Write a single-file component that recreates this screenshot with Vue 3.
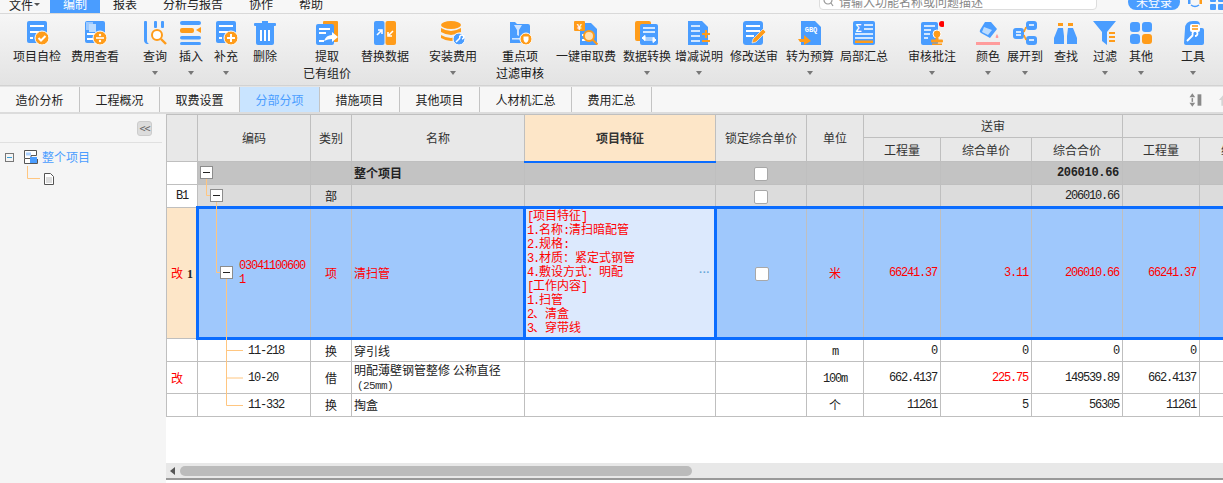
<script setup>
const B = '#4a9dff'
const O = '#ff9c1a'
const doc = `<rect x="2" y="0" width="20" height="22" rx="2" fill="${B}"/><rect x="5" y="4" width="14" height="2" fill="#fff"/><rect x="5" y="10" width="9" height="2" fill="#fff"/><rect x="5" y="16" width="3" height="2" fill="#fff"/>`

const tools = [
  { label: '项目自检', w: 58, icon: doc + `<circle cx="17" cy="17" r="7" fill="${O}" stroke="#fff"/><path d="M13.5 17l2.5 2.5 4.5-4.5" fill="none" stroke="#fff" stroke-width="2"/>` },
  { label: '费用查看', w: 58, icon: `<rect x="2" y="0" width="20" height="22" rx="2" fill="${B}"/><rect x="3" y="1" width="7" height="8" fill="#9cc9ff"/><rect x="6" y="3" width="7" height="8" fill="#bcdcff"/><rect x="4" y="12" width="8" height="2" fill="#fff"/><rect x="4" y="17" width="6" height="2" fill="#fff"/><circle cx="17" cy="17" r="7" fill="${O}" stroke="#fff"/><path d="M13 17h8" stroke="#fff" stroke-width="1.6"/><circle cx="17" cy="14" r="1.2" fill="#fff"/><circle cx="17" cy="20" r="1.2" fill="#fff"/>` },
  { label: '查询', w: 36, gap: 13, caret: true, icon: `<path d="M1 1q0-1 1-1h1q1 0 1 1v19q0 2 2 3H4q-3-1-3-4z" fill="${B}"/><rect x="11" y="0" width="3" height="7" rx="1" fill="${B}"/><rect x="18" y="0" width="3" height="7" rx="1" fill="${B}"/><circle cx="14" cy="14" r="5" fill="#fff" stroke="${O}" stroke-width="2"/><path d="M18 18l5 5" stroke="${O}" stroke-width="2.4"/>` },
  { label: '插入', w: 36, caret: true, icon: `<rect x="1" y="0" width="21" height="4" rx="2" fill="${B}"/><rect x="1" y="7" width="14" height="5" rx="2" fill="${O}"/><path d="M22 6v6l-5-3z" fill="${O}"/><rect x="1" y="15" width="21" height="3.5" rx="1.7" fill="${B}"/><rect x="1" y="21" width="21" height="3" rx="1.5" fill="${B}"/>` },
  { label: '补充', w: 34, caret: true, icon: doc + `<circle cx="17" cy="17" r="7" fill="${O}" stroke="#fff"/><path d="M13 17h8M17 13v8" stroke="#fff" stroke-width="2"/>` },
  { label: '删除', w: 44, icon: `<rect x="1" y="2" width="22" height="3" rx="1" fill="${B}"/><rect x="9" y="0" width="6" height="3" fill="${B}"/><path d="M3 5h18v17q0 2-2 2H5q-2 0-2-2z" fill="${B}"/><path d="M8 9v11M12 9v11M16 9v11" stroke="#fff" stroke-width="2"/>` },
  { label: '提取', second: '已有组价', w: 52, gap: 14, icon: `<rect x="8" y="0" width="15" height="21" rx="1" fill="${O}"/><rect x="1" y="3" width="18" height="21" rx="2" fill="${B}"/><rect x="4" y="7" width="11" height="2" fill="#fff"/><rect x="4" y="11" width="7" height="2" fill="#fff"/><rect x="4" y="19" width="5" height="2" fill="#fff"/><path d="M9 20q2-6 8-6v-3l6 5-6 5v-3q-4 0-8 2z" fill="#fff"/>` },
  { label: '替换数据', w: 64, icon: `<rect x="1" y="0" width="10.5" height="24" rx="2" fill="${B}"/><rect x="12.5" y="0" width="10.5" height="24" rx="2" fill="${O}"/><path d="M4 14l4-4M5 9h4v4" fill="none" stroke="#fff" stroke-width="1.6"/><path d="M20 10l-4 4M19 15h-4v-4" fill="none" stroke="#fff" stroke-width="1.6"/>` },
  { label: '安装费用', w: 72, caret: true, icon: `<ellipse cx="10" cy="4" rx="10" ry="4" fill="${O}"/><path d="M0 7q10 6 20 0v4q-10 6-20 0z" fill="${O}"/><path d="M0 14q10 6 20 0v3q-10 6-20 0z" fill="${O}"/><circle cx="18" cy="18" r="6" fill="${B}" stroke="#fff"/><path d="M15 21l4-4m0 0a2 2 0 1 1 2 1" fill="none" stroke="#fff" stroke-width="1.6"/>` },
  { label: '重点项', second: '过滤审核', w: 62, strong: true, icon: `<path d="M2 1h5l2 2h11q2 0 2 2v17H2z" fill="${B}"/><path d="M6 4h8l-3 5v6l-2-1V9z" fill="#cfe4ff"/><rect x="4" y="17" width="8" height="1.6" fill="#cfe4ff"/><circle cx="18" cy="18" r="6" fill="${O}" stroke="#fff"/><path d="M15.5 15.5h5v3q0 2-2.500 3.500q-2.500-1.500-2.500-3.500z" fill="#fff"/>` },
  { label: '一键审取费', w: 70, icon: `<path d="M6 2h11l6 6v16H6z" fill="${B}"/><rect x="0" y="0" width="11" height="10" rx="1" fill="${O}"/><text x="5.500" y="8.500" font-size="9" font-family="Liberation Sans" font-weight="700" text-anchor="middle" fill="#fff">¥</text><rect x="8" y="13" width="4" height="2" fill="#fff"/><rect x="8" y="18" width="4" height="2" fill="#fff"/><circle cx="15" cy="15" r="5" fill="#ffe0b3" stroke="${O}" stroke-width="2"/><path d="M18.500 18.500l5 5" stroke="${O}" stroke-width="2"/>` },
  { label: '数据转换', w: 52, caret: true, icon: `<rect x="0" y="0" width="16" height="20" rx="2" fill="${O}"/><rect x="5" y="3" width="18" height="21" rx="2" fill="${B}"/><path d="M8 7h12M8 11h12" stroke="#fff" stroke-width="1.600"/><path d="M7 17l3-2.500v5zM10 17h10M21 19l-3-2.500v5zM9 19h9" fill="#fff" stroke="#fff" stroke-width="1"/>` },
  { label: '增减说明', w: 52, caret: true, icon: `<path d="M1 0h14l6 6v18H1z" fill="${B}"/><path d="M4 5h9M4 10h9M4 15h9M4 20h9" stroke="#fff" stroke-width="1.600"/><path d="M15 13h8M19 9v8M15 20h8" stroke="${O}" stroke-width="2.200"/>` },
  { label: '修改送审', w: 58, icon: `<rect x="1" y="0" width="20" height="24" rx="3" fill="${B}"/><path d="M4 5h14M4 10h14M4 15h8" stroke="#fff" stroke-width="1.800"/><path d="M10 22l1-4L21 8l3 3-10 10z" fill="${O}" stroke="#fff" stroke-width=".6"/>` },
  { label: '转为预算', w: 54, caret: true, icon: `<path d="M3 0h14l6 6v18H3z" fill="${B}"/><text x="13" y="11" font-size="7" font-family="Liberation Mono" font-weight="700" text-anchor="middle" fill="#fff">GBQ</text><path d="M0 18h6v-4l7 6-7 4v-3H2z" fill="${O}"/>` },
  { label: '局部汇总', w: 54, icon: `<rect x="1" y="0" width="22" height="24" rx="2" fill="${B}"/><text x="6.500" y="11" font-size="10" font-family="Liberation Sans" font-weight="700" text-anchor="middle" fill="#fff">Σ</text><path d="M12 4h9M12 8h9M3 13h18M3 17h18" stroke="#fff" stroke-width="1.500"/><rect x="3" y="19.500" width="18" height="2.500" fill="${O}"/>` },
  { label: '审核批注', w: 82, caret: true, icon: `<rect x="1" y="1" width="17" height="23" rx="2" fill="${B}"/><path d="M4 5h11M4 9h7M4 13h6M4 17h4" stroke="#fff" stroke-width="1.600"/><circle cx="17" cy="13" r="4" fill="${O}" stroke="#fff"/><rect x="15.500" y="15" width="3" height="4" fill="${O}"/><rect x="11" y="18.500" width="12" height="3" rx="1" fill="${O}"/><rect x="12" y="22.500" width="10" height="1.500" fill="${O}"/><circle cx="22" cy="3" r="3" fill="#f00"/>` },
  { label: '颜色', w: 30, caret: true, icon: `<path d="M9 1h6l6 7-7 9-9-5q-2-1-1-3z" fill="${B}"/><path d="M8 6l8 3-4 5-6-3z" fill="#bcdcff"/><path d="M21 13q2 3 1 4h-2q-1-1 1-4z" fill="#ff9c9c"/><rect x="0" y="21" width="24" height="3" fill="#ff9c9c"/>` },
  { label: '展开到', w: 44, caret: true, icon: `<rect x="0" y="7" width="11" height="11" rx="3" fill="${B}"/><rect x="13" y="0" width="11" height="9" rx="3" fill="${B}"/><rect x="13" y="15" width="11" height="9" rx="3" fill="${B}"/><path d="M3 11h5M3 14h5M16 4h5M16 19h5" stroke="#fff" stroke-width="1.400"/><path d="M11 11l2-5M11 14l2 5" stroke="${O}" stroke-width="1.600"/>` },
  { label: '查找', w: 38, icon: `<rect x="4" y="2" width="5" height="3" fill="${O}"/><rect x="14" y="2" width="5" height="3" fill="${O}"/><path d="M4 7h5l1 8v8H0v-6z" fill="${B}"/><path d="M14 7h5l4 10v6H13v-8z" fill="${B}"/>` },
  { label: '过滤', w: 40, caret: true, icon: `<path d="M0 0h23l-9 11v13l-5-4v-9z" fill="${B}"/><path d="M16 12h6M16 16h6M16 20h6" stroke="${O}" stroke-width="1.800"/>` },
  { label: '其他', w: 32, caret: true, icon: `<rect x="1" y="1" width="10" height="10" rx="3" fill="${B}"/><rect x="13" y="1" width="10" height="10" rx="3" fill="${B}"/><rect x="1" y="13" width="10" height="10" rx="3" fill="${B}"/><rect x="13" y="13" width="10" height="10" rx="3" fill="${O}"/>` },
  { label: '工具', w: 72, caret: true, icon: `<path d="M4 8q0-8 8-8h3q4 0 4 4v3h2q2 0 2 2v13q0 2-2 2H5q-2 0-2-2z" fill="${B}"/><rect x="9" y="3" width="10" height="8" rx="2" fill="#fff"/><path d="M11 5h6" stroke="${O}" stroke-width="1.600"/><path d="M11 8h6" stroke="${O}" stroke-width="1.600"/><path d="M6 20l6-6m0 0a2.500 2.500 0 1 1 2 1" fill="none" stroke="#fff" stroke-width="1.800"/>` },
]

const tabs = [
  { label: '造价分析', w: 80 },
  { label: '工程概况', w: 80 },
  { label: '取费设置', w: 80 },
  { label: '分部分项', w: 80, active: true },
  { label: '措施项目', w: 80 },
  { label: '其他项目', w: 80 },
  { label: '人材机汇总', w: 92 },
  { label: '费用汇总', w: 80 },
]

const menus = ['报表', '分析与报告', '协作', '帮助']
const cols = [31, 113, 41, 173, 191, 91, 57, 77, 91, 91, 77, 91]
const features = ['[项目特征]', '1.名称:清扫暗配管', '2.规格:', '3.材质：紧定式钢管', '4.敷设方式：明配', '[工作内容]', '1.扫管', '2、清盒', '3、穿带线']
const subRows = [
  { cls: 'r-sub', mark: '', code: '11-218', type: '换', name: '穿引线', unit: 'm', vals: ['0', '0', '0', '0', '0'] },
  { cls: 'r-tall', mark: '改', code: '10-20', type: '借', name: '明配薄壁钢管整修 公称直径', name2: '(25mm)', unit: '100m', vals: ['662.4137', '225.75', '149539.89', '662.4137', '225.75'], redPrice: true },
  { cls: 'r-sub', mark: '', code: '11-332', type: '换', name: '掏盒', unit: '个', vals: ['11261', '5', '56305', '11261', '5'] },
]

// half-width runs are squeezed to 6px a char, CJK keeps its 12px
function splitRuns(line) {
  return line.split(/([\x00-\x7f]+)/).filter(Boolean).map((text) => ({ text, lat: /^[\x00-\x7f]/.test(text) }))
}
</script>

<template>
  <div class="app">
    <div class="menubar">
      <div class="menu-file">文件<i class="mini-caret"></i></div>
      <div class="menu-item active">编制</div>
      <div v-for="m in menus" :key="m" class="menu-item">{{ m }}</div>
      <div class="search">
        <svg width="11" height="11" viewBox="0 0 11 11"><circle cx="5" cy="3" r="4" fill="none" stroke="#999" stroke-width="1.200"/><path d="M8 6l2 3" stroke="#999" stroke-width="1.200"/></svg>
        <span>请输入功能名称或问题描述</span>
      </div>
      <div class="login">未登录</div>
      <svg class="top-ico" width="16" height="13" viewBox="0 0 16 13"><path d="M2 6a6 6 0 0 1 12 0" fill="none" stroke="#4a9dff" stroke-width="1.500" transform="translate(0 -3)"/><rect x="1" y="2" width="2.500" height="5" fill="#4a9dff"/><rect x="12.500" y="2" width="2.500" height="5" fill="#ff9c1a"/><path d="M4 8q4 3 8 0" fill="none" stroke="#4a9dff" stroke-width="1.500"/></svg>
      <svg class="top-ico grid-ico" width="14" height="13" viewBox="0 0 14 13"><rect x="0" y="0" width="6" height="5" rx="1" fill="#4a9dff"/><rect x="8" y="0" width="6" height="5" rx="1" fill="#4a9dff"/><rect x="0" y="7" width="6" height="6" rx="1" fill="#4a9dff"/><rect x="8" y="7" width="6" height="6" rx="1" fill="#4a9dff"/></svg>
    </div>

    <div class="toolbar">
      <div
        v-for="t in tools"
        :key="t.label"
        class="tool"
        :style="{ width: t.w + 'px', marginLeft: (t.gap || 0) + 'px' }"
      >
        <svg width="24" height="24" viewBox="0 0 24 24" v-html="t.icon"></svg>
        <div class="tool-label" :class="{ strong: t.strong }">{{ t.label }}</div>
        <div v-if="t.second" class="tool-label second" :class="{ strong: t.strong }">{{ t.second }}</div>
        <i v-if="t.caret" class="caret"></i>
      </div>
    </div>

    <div class="tabs">
      <div
        v-for="t in tabs"
        :key="t.label"
        class="tab"
        :class="{ active: t.active }"
        :style="{ width: t.w + 'px' }"
      >{{ t.label }}</div>
      <div class="tab-tools">
        <svg width="14" height="14" viewBox="0 0 14 14"><path d="M3.500 0l3 4h-6zM3.500 14l3-4h-6z" fill="#8a8a8a"/><rect x="2.700" y="5" width="1.600" height="4" fill="#8a8a8a"/><rect x="9" y="1" width="4" height="12" fill="#8a8a8a"/></svg>
        <svg width="6" height="14" viewBox="0 0 6 14"><path d="M6 1L1 7h2.500v6H6z" fill="#d4d4d4"/></svg>
      </div>
    </div>

    <div class="body">
      <aside class="side">
        <div class="side-head"><button class="collapse">&lt;&lt;</button></div>
        <div class="tree-root">
          <span class="tree-minus"></span>
          <svg width="14" height="14" viewBox="0 0 14 14"><path d="M.5.5h12v5H7v3H.5zM.5 9v4.500h13V9" fill="#fff" stroke="#555"/><rect x="6" y="7" width="7" height="6" fill="#4a9dff"/><rect x="2" y="2.500" width="5" height="3" fill="#a9d0ff"/></svg>
          <span class="tree-text">整个项目</span>
        </div>
        <div class="tree-child">
          <svg width="28" height="19" viewBox="0 0 28 19"><path d="M.5 0v12.500H13" fill="none" stroke="#ffc680"/><path d="M17.500 7.500h6l3 3v8h-9z" fill="#fff" stroke="#555"/><path d="M19 12h6M19 14h6M19 16h6" stroke="#bbb"/></svg>
        </div>
      </aside>

      <main class="pane">
        <div class="grid-wrap">
          <table class="grid">
            <colgroup><col v-for="(c, i) in cols" :key="i" :width="c"></colgroup>
            <thead>
              <tr class="h1">
                <th rowspan="2"></th>
                <th rowspan="2">编码</th>
                <th rowspan="2">类别</th>
                <th rowspan="2">名称</th>
                <th rowspan="2" class="th-focus">项目特征</th>
                <th rowspan="2">锁定综合单价</th>
                <th rowspan="2">单位</th>
                <th colspan="3">送审</th>
                <th colspan="2"></th>
              </tr>
              <tr class="h2">
                <th>工程量</th><th>综合单价</th><th>综合合价</th><th>工程量</th><th>综合单价</th>
              </tr>
            </thead>
            <tbody>
              <tr class="r-root">
                <td class="rh"></td><td></td><td></td>
                <td class="name strong-cell">整个项目</td><td></td>
                <td class="ctr"><span class="check"></span></td><td></td><td></td><td></td>
                <td class="num strong-cell">206010.66</td><td></td><td></td>
              </tr>
              <tr class="r-part">
                <td class="rh num-c">B1</td><td></td><td class="ctr">部</td>
                <td></td><td></td>
                <td class="ctr"><span class="check"></span></td><td></td><td></td><td></td>
                <td class="num">206010.66</td><td></td><td></td>
              </tr>
              <tr class="r-sel">
                <td class="rh sel-rh"><span class="red">改</span><b>1</b></td>
                <td class="code-main">030411006001</td>
                <td class="ctr">项</td>
                <td class="name">清扫管</td>
                <td class="feat">
                  <div class="feat-lines">
                    <div v-for="f in features" :key="f" class="feat-line"><span v-for="(run, i) in splitRuns(f)" :key="i" :class="{ lat: run.lat }">{{ run.text }}</span></div>
                  </div>
                  <span class="dots">···</span>
                </td>
                <td class="ctr"><span class="check"></span></td>
                <td class="ctr">米</td>
                <td class="num">66241.37</td>
                <td class="num">3.11</td>
                <td class="num">206010.66</td>
                <td class="num">66241.37</td>
                <td class="num">3.11</td>
              </tr>
              <tr v-for="r in subRows" :key="r.code" :class="r.cls">
                <td class="rh"><span class="red">{{ r.mark }}</span></td>
                <td class="code-sub">{{ r.code }}</td>
                <td class="ctr">{{ r.type }}</td>
                <td class="name">{{ r.name }}<div v-if="r.name2" class="name2">{{ r.name2 }}</div></td>
                <td></td><td></td>
                <td class="ctr"><span v-for="(run, i) in splitRuns(r.unit)" :key="i" :class="{ lat: run.lat }">{{ run.text }}</span></td>
                <td
                  v-for="(v, i) in r.vals"
                  :key="i"
                  class="num"
                  :class="{ red: r.redPrice && i === 1 }"
                >{{ v }}</td>
              </tr>
            </tbody>
          </table>

          <svg class="tree-lines" width="110" height="303" viewBox="0 0 110 303">
            <g fill="none" stroke="#ffc680">
              <path d="M40.500 62v19.500H44"/>
              <path d="M50.500 87v71.500H54"/>
              <path d="M60.500 164v127.500H77M60.500 236.500H77M60.500 264H77"/>
            </g>
            <g fill="#fff" stroke="#8c8c8c">
              <rect x="34.500" y="52.500" width="12" height="12"/>
              <rect x="44.500" y="75.500" width="12" height="12"/>
              <rect x="54.500" y="152.500" width="12" height="12"/>
            </g>
            <path d="M37 58.500h7M47 81.500h7M57 158.500h7" stroke="#222"/>
          </svg>
        </div>

        <div class="hscroll">
          <i class="arrow"></i>
          <div class="thumb"></div>
        </div>
      </main>
    </div>
  </div>
</template>

<style>
html, body {
  margin: 0;
  background: #f5f5f5;
}
</style>

<style scoped>
.app {
  width: 1223px;
  height: 483px;
  overflow: hidden;
  display: flex;
  flex-direction: column;
  font: 12px/16px "Noto Sans CJK SC", sans-serif;
  color: #222;
  background: #f5f5f5;
}

.menubar {
  height: 13px;
  flex: none;
  display: flex;
  overflow: hidden;
  border-bottom: 1px solid #d9d9d9;
  background: #f7f7f7;
}
.menu-file {
  flex: none;
  width: 50px;
  padding-left: 9px;
  box-sizing: border-box;
  margin-top: -4px;
  height: 17px;
  display: flex;
  align-items: center;
}
.mini-caret {
  margin-left: 1px;
  border: 3px solid transparent;
  border-top: 3px solid #555;
  border-bottom: 0;
}
.menu-item {
  flex: none;
  padding: 0 13px;
  margin-top: -4px;
  height: 17px;
  white-space: nowrap;
}
.menu-item.active {
  background: #4a9dff;
  color: #fff;
}
.search {
  flex: none;
  margin-left: 483px;
  margin-top: -6px;
  width: 278px;
  height: 16px;
  box-sizing: border-box;
  padding-left: 3px;
  display: flex;
  align-items: center;
  gap: 5px;
  background: #fff;
  border: 1px solid #ddd;
  border-radius: 4px;
  color: #888;
}
.login {
  flex: none;
  margin-left: 31px;
  margin-top: -6px;
  width: 52px;
  height: 16px;
  line-height: 15px;
  text-align: center;
  color: #fff;
  background: #4a9dff;
  border-radius: 8px;
}
.top-ico {
  margin-left: 7px;
  margin-top: -3px;
  flex: none;
}
.grid-ico {
  margin-left: 7px;
}

.toolbar {
  height: 72px;
  flex: none;
  box-sizing: border-box;
  padding: 7px 0 0 8px;
  display: flex;
  overflow: hidden;
  background: linear-gradient(#f6f6f6, #e3e3e3);
  border-bottom: 1px solid #d2d2d2;
}
.tool {
  flex: none;
  display: flex;
  flex-direction: column;
  align-items: center;
}
.tool-label {
  white-space: nowrap;
}
.tool svg + .tool-label {
  margin-top: 3px;
}
.tool-label.second {
  margin-top: 1px;
}
.tool-label.strong {
  color: #111;
}
.caret {
  margin-top: 7px;
  border: 3.500px solid transparent;
  border-top: 4px solid #777;
  border-bottom: 0;
}

.tabs {
  height: 25px;
  flex: none;
  display: flex;
  background: #f7f7f7;
  border-bottom: 2px solid #dcdcdc;
  border-top: 1px solid #e4e4e4;
}
.tab {
  box-sizing: border-box;
  flex: none;
  line-height: 25px;
  text-align: center;
  border-right: 1px solid #c4c4c4;
}
.tab.active {
  background: #c9e4ff;
  color: #4a9dff;
}
.tab-tools {
  margin-left: auto;
  display: flex;
  align-items: center;
  gap: 16px;
  margin-right: -1px;
  width: 35px;
}

.body {
  flex: 1;
  min-height: 0;
  display: flex;
}
.side {
  width: 166px;
  flex: none;
  box-sizing: border-box;
  padding-right: 4px;
}
.side-head {
  height: 29px;
  border-bottom: 1px solid #e0e0e0;
  display: flex;
  justify-content: flex-end;
  align-items: flex-start;
  padding: 7px 10px 0 0;
  box-sizing: border-box;
}
.collapse {
  width: 15px;
  height: 15px;
  padding: 0;
  font: 10px/13px "DejaVu Sans Mono", monospace;
  letter-spacing: -1px;
  color: #666;
  background: #dcdcdc;
  border: 1px solid #ccc;
  border-radius: 3px;
}
.tree-root {
  margin-top: 6px;
  padding-left: 5px;
  display: flex;
  align-items: center;
  height: 16px;
}
.tree-minus {
  width: 9px;
  height: 9px;
  box-sizing: border-box;
  border: 1px solid #777;
  background: linear-gradient(#3aa0d8, #3aa0d8) center / 5px 1px no-repeat #f5f5f5;
  margin-right: 10px;
}
.tree-text {
  margin-left: 4px;
  color: #4a9dff;
}
.tree-child {
  margin-left: 27px;
  margin-top: 1px;
  height: 19px;
}

.pane {
  flex: 1;
  min-width: 0;
  display: flex;
  flex-direction: column;
  background: #fff;
}
.grid-wrap {
  position: relative;
  flex: none;
  height: 349px;
  overflow: hidden;
  background: #fff;
}
.grid {
  width: 1073px;
  table-layout: fixed;
  border-collapse: collapse;
}
.grid th,
.grid td {
  padding: 0;
  border: 1px solid #bfbfbf;
  box-sizing: border-box;
  overflow: hidden;
  white-space: nowrap;
}
.grid th {
  background: #e8e8e8;
  font-weight: 400;
  color: #333;
}
.grid .th-focus {
  background: #fde6c8;
  font-weight: 700;
  border-bottom: 2px solid #0a6cff;
}
.h1 { height: 23px; }
.h2 { height: 24px; }
.r-root { height: 23px; background: #c3c3c3; }
.r-part { height: 23px; background: #dcdcdc; }
.r-sel { height: 131px; background: #9fc8fc; color: #f00; }
.r-sub { height: 23px; }
.r-tall { height: 32px; }

.grid .rh {
  background: #fff;
  text-align: left;
  padding-left: 4px;
}
.grid .num-c {
  padding-left: 0;
  text-align: center;
  font: 12px "Liberation Mono", monospace;
  letter-spacing: -1.200px;
}
.grid .sel-rh {
  background: #fde6c8;
}
.sel-rh b {
  margin-left: 4px;
  color: #222;
  font: 700 12px "Liberation Serif", serif;
}
.red {
  color: #f00;
}
.ctr {
  text-align: center;
}
.lat {
  font-family: "Liberation Mono", monospace;
  font-size: 12px;
  letter-spacing: -1.200px;
}
.grid .name {
  padding-left: 2px;
}
.name2 {
  margin: 1px 0 0 3px;
  font: 11px/14px "Liberation Mono", monospace;
  letter-spacing: -0.600px;
  color: #333;
}
.strong-cell {
  font-weight: 700;
}
.grid .num {
  text-align: right;
  padding-right: 3px;
  font: 12px "Liberation Mono", monospace;
  letter-spacing: -1.200px;
}
.grid .num.strong-cell {
  font-weight: 700;
  letter-spacing: -0.300px;
}
.check {
  display: inline-block;
  width: 14px;
  height: 14px;
  box-sizing: border-box;
  vertical-align: middle;
  background: #fff;
  border: 1px solid #a8a8a8;
  border-radius: 2px;
}
.r-sel td {
  border-top: 3px solid #0a6cff;
  border-bottom: 3px solid #0a6cff;
}
.r-sel td:nth-child(1) {
  border-top: 1px solid #bfbfbf;
  border-bottom: 1px solid #bfbfbf;
  border-right: 3px solid #0a6cff;
}
.grid .code-main {
  padding: 0 5px 0 40px;
  white-space: normal;
  word-break: break-all;
  font: 12px/14px "Liberation Mono", monospace;
  letter-spacing: -1.200px;
}
.grid .code-sub {
  padding-left: 50px;
  font: 12px "Liberation Mono", monospace;
  letter-spacing: -1.200px;
}
.grid .feat {
  position: relative;
  background: #dce9fd;
  border: 3px solid #0a6cff;
  padding: 0 0 0 1px;
}
.feat-lines {
  margin-top: -4px;
  font: 12px/14px "Noto Sans CJK SC", sans-serif;
}
.feat-line {
  height: 14px;
}
.dots {
  position: absolute;
  right: 4px;
  top: 57px;
  color: #6aa7d8;
  font: 700 11px "Liberation Sans", sans-serif;
}
.tree-lines {
  position: absolute;
  left: 0;
  top: 0;
  pointer-events: none;
}

.hscroll {
  height: 15px;
  flex: none;
  display: flex;
  align-items: center;
  background: #e8e8e8;
  border-bottom: 2px solid #999;
}
.arrow {
  margin-left: 4px;
  border: 4px solid transparent;
  border-right: 5px solid #555;
  border-left: 0;
}
.thumb {
  margin-left: 5px;
  width: 512px;
  height: 10px;
  border-radius: 5px;
  background: #bbb;
}
</style>
